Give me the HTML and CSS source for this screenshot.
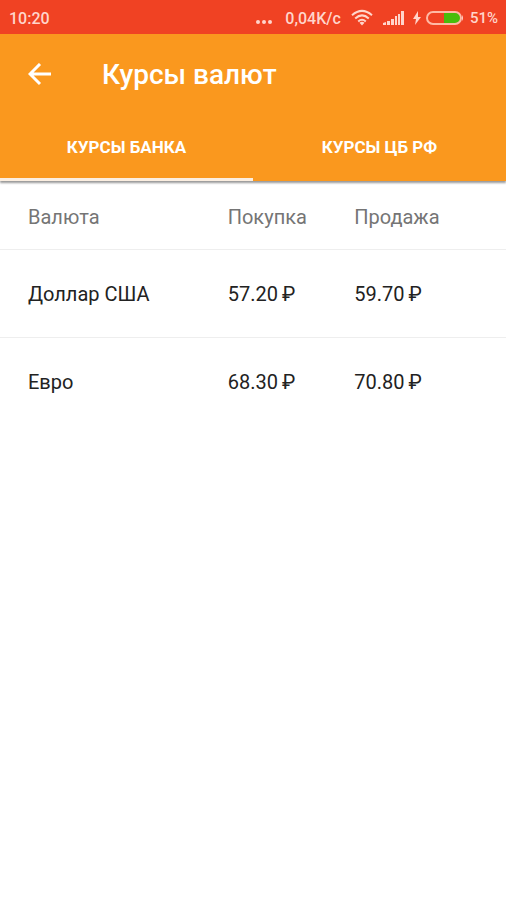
FILE: index.html
```html
<!DOCTYPE html>
<html lang="ru">
<head>
    <meta charset="UTF-8">
    <meta name="viewport" content="width=device-width, initial-scale=1.0">
    <title>Курсы валют</title>
    <link rel="stylesheet" href="styles.css">
</head>
<body>
    <div class="status-bar">
        <span class="time">10:20</span>
        <svg class="dots" width="18" height="20" viewBox="0 0 18 20">
            <circle cx="3" cy="14" r="2"/><circle cx="9" cy="14" r="2"/><circle cx="15" cy="14" r="2"/>
        </svg>
        <span class="speed">0,04K/c</span>
        <svg class="wifi" width="22" height="18" viewBox="0 0 22 18">
            <path d="M1 6.2Q11-2.4 21 6.2M4.2 9.4Q11 3.4 17.8 9.4M7.2 12.4Q11 9 14.8 12.4"/>
            <path class="fill" d="M8.5 13.8Q11 11.800 13.500 13.800L11 16.500z"/>
        </svg>
        <svg class="signal" width="21" height="16" viewBox="0 0 21 16">
            <path d="M0 15v-2l3-1v3zM4 15v-4h3v4zM8 15V9h3v6zM12 15V6h2v9zM15 15V4h2v11zM18 15V1h3v14z"/>
        </svg>
        <svg class="bolt" width="8" height="14" viewBox="0 0 8 14">
            <path d="M5 0L0 8h3L2 14 8 6H5z"/>
        </svg>
        <svg class="battery" width="38" height="14" viewBox="0 0 38 14">
            <path class="charge" d="M18 2h12a5 5 0 0 1 0 10H18z"/>
            <rect class="shell" x="1" y="1" width="34" height="12" rx="6"/>
            <path class="cap" d="M36 4q2 3 0 6z"/>
        </svg>
        <span class="percent">51%</span>
    </div>
    <header class="app-bar">
        <div class="toolbar">
            <button class="back" type="button" aria-label="Назад">
                <svg width="24" height="24" viewBox="0 0 24 24">
                    <path d="M23 11H3M12 1L2 11l10 10"/>
                </svg>
            </button>
            <h1>Курсы валют</h1>
        </div>
        <nav class="tabs">
            <button class="tab active" type="button">КУРСЫ БАНКА</button>
            <button class="tab" type="button">КУРСЫ ЦБ РФ</button>
        </nav>
    </header>
    <main>
        <table class="rates">
            <thead>
                <tr>
                    <th class="currency">Валюта</th>
                    <th class="buy">Покупка</th>
                    <th>Продажа</th>
                </tr>
            </thead>
            <tbody>
                <tr>
                    <td>Доллар США</td>
                    <td>57.20&thinsp;₽</td>
                    <td>59.70&thinsp;₽</td>
                </tr>
                <tr>
                    <td>Евро</td>
                    <td>68.30&thinsp;₽</td>
                    <td>70.80&thinsp;₽</td>
                </tr>
            </tbody>
        </table>
    </main>
</body>
</html>
```
FILE: styles.css
```css
* { box-sizing: border-box; }
body { margin: 0; background: #fff; color: #222; font-family: Roboto, sans-serif; }
h1 { margin: 0; font-size: 28px; line-height: 32px; font-weight: 500; }
button { padding: 0; border: 0; background: none; color: inherit; font: inherit; cursor: pointer; }
svg { display: block; flex: none; }

.status-bar {
    display: flex;
    align-items: center;
    height: 34px;
    padding: 2px 8px 0 9px;
    background: #f04223;
    color: #ffd5cb;
    font-size: 16px;
    font-weight: 500;
    white-space: nowrap;
}
.status-bar svg { fill: #ffd5cb; }
.time { margin-right: auto; }
.percent { font-size: 15px; }
.dots { margin-right: 12px; }
.speed { margin-right: 10px; }
.wifi { margin-right: 10px; }
.status-bar .wifi { fill: none; stroke: #ffd5cb; stroke-width: 2; }
.status-bar .wifi .fill { fill: #ffd5cb; stroke: none; }
.signal { margin-right: 9px; }
.bolt { margin-right: 5px; }
.battery { margin-right: 6px; }
.battery .charge { fill: #48bd0b; }
.battery .shell { fill: none; stroke: #ffb9a5; stroke-width: 2; }

.app-bar {
    position: relative;
    background: #fa981e;
    color: #fff;
    box-shadow: 0 2px 2px #999;
}
.toolbar { display: flex; align-items: center; height: 80px; padding: 2px 28px 0; }
.back { margin-right: 50px; }
.back svg { fill: none; stroke: #fff; stroke-width: 3; }
.tabs { display: flex; }
.tab {
    flex: 1;
    height: 67px;
    padding-top: 2px;
    border-bottom: 3px solid transparent;
    font-size: 17px;
    font-weight: 700;
}
.tab.active { border-bottom-color: #fbeee0; }

.rates {
    width: 100%;
    border-collapse: collapse;
    table-layout: fixed;
    font-size: 20px;
    line-height: 24px;
    text-align: left;
}
.rates th { height: 68px; padding: 4px 0 0; color: #757575; font-weight: 400; }
.rates td { height: 88px; padding: 2px 0 0; }
.rates tr { border-bottom: 1px solid #eee; }
.rates tbody tr:last-child { border-bottom: 0; }
.rates th:first-child, .rates td:first-child { padding-left: 28px; }
.rates .currency { width: 45%; }
.rates .buy { width: 25%; }
```
